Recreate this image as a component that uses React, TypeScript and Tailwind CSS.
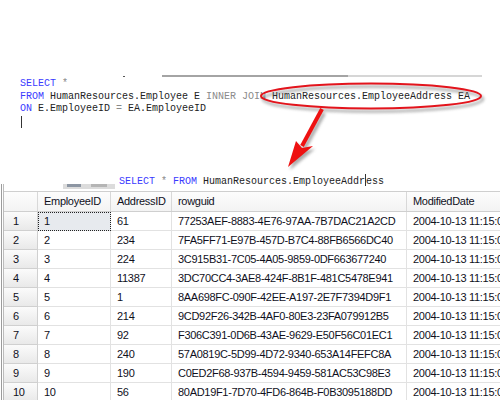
import React from 'react';

const rows = [
  { id: 1, addr: '61', guid: '77253AEF-8883-4E76-97AA-7B7DAC21A2CD' },
  { id: 2, addr: '234', guid: '7FA5FF71-E97B-457D-B7C4-88FB6566DC40' },
  { id: 3, addr: '224', guid: '3C915B31-7C05-4A05-9859-0DF663677240' },
  { id: 4, addr: '11387', guid: '3DC70CC4-3AE8-424F-8B1F-481C5478E941' },
  { id: 5, addr: '1', guid: '8AA698FC-090F-42EE-A197-2E7F7394D9F1' },
  { id: 6, addr: '214', guid: '9CD92F26-342B-4AF0-80E3-23FA079912B5' },
  { id: 7, addr: '92', guid: 'F306C391-0D6B-43AE-9629-E50F56C01EC1' },
  { id: 8, addr: '240', guid: '57A0819C-5D99-4D72-9340-653A14FEFC8A' },
  { id: 9, addr: '190', guid: 'C0ED2F68-937B-4594-9459-581AC53C98E3' },
  { id: 10, addr: '56', guid: '80AD19F1-7D70-4FD6-864B-F0B3095188DD' },
];

const kw = 'text-[#3a3aff]';
const gray = 'text-[#8a8a8a]';

function Editor() {
  return (
    <div className="h-[184px] pt-[75px] font-['Liberation_Mono',monospace] text-[10px] leading-[12.5px] text-[#222]">
      <div className="flex h-[2px]">
        <div className="ml-[123px] mt-px h-px w-[2px] bg-[#555]" />
        <div className="ml-[37px] w-[186px] bg-[#a4a4a4]" />
        <div className="w-[134px] bg-[#d6d6d6]" />
      </div>
      <div className="mt-px pl-[20px] whitespace-pre">
        <div>
          <span className={kw}>SELECT</span> <span className={gray}>*</span>
        </div>
        <div>
          <span className={kw}>FROM</span> HumanResources.Employee E <span className={gray}>INNER JOIN</span> HumanResources.EmployeeAddress EA
        </div>
        <div>
          <span className={kw}>ON</span> E.EmployeeID <span className={gray}>=</span> EA.EmployeeID
        </div>
        <div className="flex h-[12.5px] items-center">
          <div className="ml-px h-[12px] w-px bg-[#333]" />
        </div>
      </div>
      <div className="mt-[44px] pl-[119px] whitespace-pre">
        <span className={kw}>SELECT</span> <span className={gray}>*</span> <span className={kw}>FROM</span> HumanResources.EmployeeAddr
        <span className="inline-block h-[12px] w-px translate-y-[2px] bg-[#333]" />
        ess
      </div>
    </div>
  );
}

function Overlay() {
  return (
    <svg className="pointer-events-none absolute left-0 top-0" width="500" height="400" viewBox="0 0 500 400">
      <defs>
        <filter id="sh" x="-20%" y="-50%" width="140%" height="200%">
          <feGaussianBlur stdDeviation="1.5" />
        </filter>
      </defs>
      <g filter="url(#sh)" opacity="0.55" transform="translate(2 3)">
        <ellipse cx="371" cy="96" rx="110" ry="12.5" fill="none" stroke="#666" strokeWidth="2.5" />
        <line x1="322" y1="110" x2="302" y2="146" stroke="#666" strokeWidth="4" />
        <polygon points="288,167 296,141 302,148 313,146" fill="#666" />
      </g>
      <ellipse cx="371" cy="96" rx="110" ry="12.5" fill="none" stroke="#e3141c" strokeWidth="2" />
      <line x1="322" y1="109" x2="302" y2="146" stroke="#ee1111" strokeWidth="4" />
      <polygon points="288,167 296,141 302,148 313,146" fill="#ee1111" />
    </svg>
  );
}

const cols = 'grid grid-cols-[34px_73px_61px_235px_140px]';

function Grid() {
  const base = 'flex items-center overflow-hidden whitespace-nowrap';
  const cell = `${base} border-b border-r border-[#e2e2e2] pl-[6px]`;
  const head = `${base} border-r border-[#d8d8d8] pl-[6px]`;
  const rh = `${base} pl-[9px] border-b border-r border-[#d0d0d0] bg-gradient-to-b from-[#fbfbfb] to-[#e9e9e9]`;
  return (
    <div className="flex">
      <div className="flex">
        <div className="ml-px w-px bg-[#9c9c9c]" />
        <div className="w-px" />
        <div className="w-px bg-[#bcbcbc]" />
      </div>
      <div className="mt-[7px] font-['Liberation_Sans',Arial,sans-serif] text-[11px] tracking-[-0.3px] text-[#10101c]">
        <div className={`${cols} h-[21px] border-y border-[#cfcfcf] bg-gradient-to-b from-[#fdfdfd] to-[#f3f3f3]`}>
          <div className={head} />
          <div className={head}>EmployeeID</div>
          <div className={head}>AddressID</div>
          <div className={head}>rowguid</div>
          <div className={head}>ModifiedDate</div>
        </div>
        {rows.map((r) => (
          <div key={r.id} className={`${cols} h-[19px]`}>
            <div className={rh}>{r.id}</div>
            {r.id === 1 ? (
              <div className={`${base} border border-dotted border-[#222] bg-[#e7eaee] pl-[5px]`}>{r.id}</div>
            ) : (
              <div className={cell}>{r.id}</div>
            )}
            <div className={cell}>{r.addr}</div>
            <div className={`${cell} pl-[4px]`}>{r.guid}</div>
            <div className={cell}>2004-10-13 11:15:07.263</div>
          </div>
        ))}
      </div>
    </div>
  );
}

export default function App() {
  return (
    <div className="relative h-[400px] w-[500px] overflow-hidden bg-white">
      <Editor />
      <div className="relative">
        <div className="absolute left-[63px] top-0 flex h-[5px] w-[52px] bg-[#dcdcdc]">
          <div className="ml-[4px] h-[3px] w-[14px] bg-[#8d96a3]" />
          <div className="ml-[10px] h-[3px] w-[16px] bg-[#b5b5b5]" />
        </div>
        <Grid />
      </div>
      <Overlay />
    </div>
  );
}
